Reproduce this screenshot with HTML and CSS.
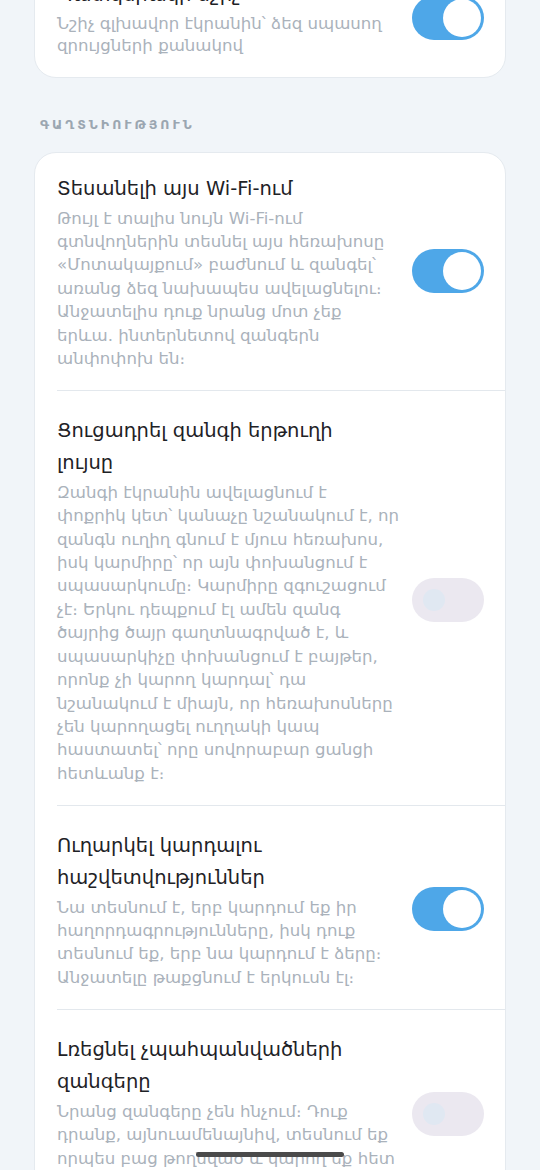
FILE: index.html
```html
<!DOCTYPE html>
<html lang="hy">
<head>
	<meta charset="UTF-8">
	<meta name="viewport" content="width=device-width, initial-scale=1.0">
	<title>Կարգավորումներ</title>
	<link rel="stylesheet" href="styles.css">
</head>
<body>
	<div class="screen">
		<section class="card card-top">
			<div class="row">
				<div class="text">
					<div class="title">Պատկերակի նշիչ</div>
					<div class="desc">Նշիչ գլխավոր էկրանին՝ ձեզ սպասող զրույցների քանակով</div>
				</div>
				<span class="switch on"><span class="knob"></span></span>
			</div>
		</section>

		<h2 class="section-label">Գաղտնիություն</h2>

		<section class="card">
			<div class="row">
				<div class="text">
					<div class="title">Տեսանելի այս Wi-Fi-ում</div>
					<div class="desc">Թույլ է տալիս նույն Wi-Fi-ում գտնվողներին տեսնել այս հեռախոսը «Մոտակայքում» բաժնում և զանգել՝ առանց ձեզ նախապես ավելացնելու։ Անջատելիս դուք նրանց մոտ չեք երևա. ինտերնետով զանգերն անփոփոխ են։</div>
				</div>
				<span class="switch on"><span class="knob"></span></span>
			</div>
			<div class="row">
				<div class="text">
					<div class="title">Ցուցադրել զանգի երթուղի լույսը</div>
					<div class="desc">Զանգի էկրանին ավելացնում է փոքրիկ կետ՝ կանաչը նշանակում է, որ զանգն ուղիղ գնում է մյուս հեռախոս, իսկ կարմիրը՝ որ այն փոխանցում է սպասարկումը։ Կարմիրը զգուշացում չէ։ Երկու դեպքում էլ ամեն զանգ ծայրից ծայր գաղտնագրված է, և սպասարկիչը փոխանցում է բայթեր, որոնք չի կարող կարդալ՝ դա նշանակում է միայն, որ հեռախոսները չեն կարողացել ուղղակի կապ հաստատել՝ որը սովորաբար ցանցի հետևանք է։</div>
				</div>
				<span class="switch"><span class="knob"></span></span>
			</div>
			<div class="row">
				<div class="text">
					<div class="title">Ուղարկել կարդալու հաշվետվություններ</div>
					<div class="desc">Նա տեսնում է, երբ կարդում եք իր հաղորդագրությունները, իսկ դուք տեսնում եք, երբ նա կարդում է ձերը։ Անջատելը թաքցնում է երկուսն էլ։</div>
				</div>
				<span class="switch on"><span class="knob"></span></span>
			</div>
			<div class="row">
				<div class="text">
					<div class="title">Լռեցնել չպահպանվածների զանգերը</div>
					<div class="desc">Նրանց զանգերը չեն հնչում։ Դուք դրանք, այնուամենայնիվ, տեսնում եք որպես բաց թողնված և կարող եք հետ զանգել նրանց, երբ հարմար է։</div>
				</div>
				<span class="switch"><span class="knob"></span></span>
			</div>
		</section>
	</div>
	<div class="home-bar"></div>
</body>
</html>
```

FILE: styles.css
```css
html, body {
	margin: 0;
	padding: 0;
	background: #f1f5f9;
	height: 100%;
	overflow: hidden;
}
body {
	font-family: "DejaVu Sans", sans-serif;
	color: #1e2226;
}
.screen {
	padding: 0 34px;
	margin-top: -42px;
}
.card {
	background: #fff;
	border: 1px solid #e5eaef;
	border-radius: 22px;
}
.row {
	display: flex;
	align-items: center;
	gap: 12px;
	margin-left: 22px;
	padding: 24px 21px 19.5px 0;
	border-bottom: 1px solid #e3e8ed;
}
.card .row:first-child {
	padding-top: 20px;
}
.card .row:last-child {
	border-bottom: none;
}
.text {
	flex: 1;
	min-width: 0;
}
.title {
	font-size: 19.5px;
	line-height: 32px;
	margin-bottom: 2px;
	padding-right: 10px;
	color: #1e2226;
}
.desc {
	font-size: 16.6px;
	line-height: 23.4px;
	color: #aab2bb;
}
.card-top .desc {
	line-height: 22px;
}
.section-label {
	margin: 40px 0 20px 6px;
	font-size: 12.5px;
	font-weight: 600;
	letter-spacing: 3px;
	text-transform: uppercase;
	color: #9ba6b1;
	line-height: 14px;
}
.switch {
	flex: none;
	position: relative;
	width: 72px;
	height: 44px;
	border-radius: 22px;
	background: #ebe8f0;
}
.switch .knob {
	position: absolute;
	left: 11px;
	top: 11px;
	width: 22px;
	height: 22px;
	border-radius: 50%;
	background: #e0e8f2;
}
.switch.on {
	background: #4ea7e8;
}
.switch.on .knob {
	left: 31px;
	top: 3px;
	width: 38px;
	height: 38px;
	background: #fff;
}
.home-bar {
	position: fixed;
	left: 196px;
	bottom: 13px;
	width: 148px;
	height: 5px;
	border-radius: 3px;
	background: #4a4a4a;
}
```
